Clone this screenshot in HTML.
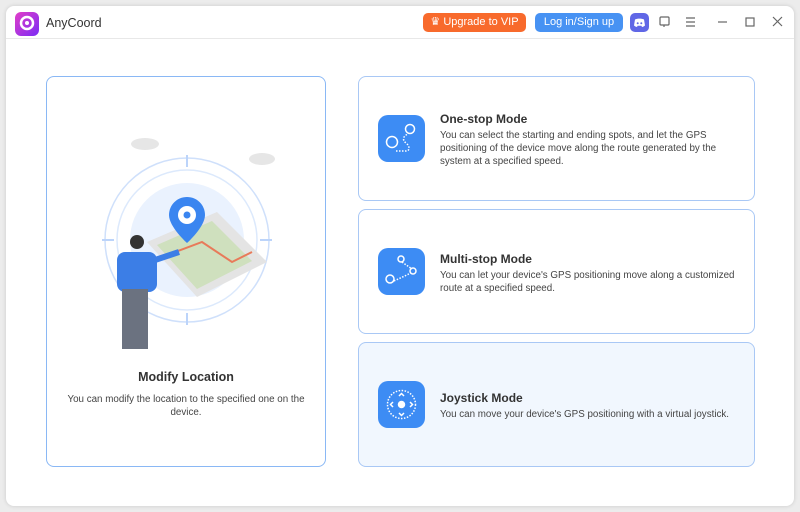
<!DOCTYPE html>
<html><head><meta charset="utf-8"><style>
*{box-sizing:border-box;margin:0;padding:0}
body{width:800px;height:512px;background:#ececec;font-family:"Liberation Sans",sans-serif;position:relative;overflow:hidden;color:#333}
.win{position:absolute;left:6px;top:6px;width:788px;height:500px;background:#fff;border-radius:8px;box-shadow:0 0 4px rgba(0,0,0,.15)}
.tb{position:absolute;left:0;top:0;width:788px;height:33px;border-bottom:1px solid #e8e8e8}
.logo{position:absolute;left:9px;top:6px;width:24px;height:24px;border-radius:6px;background:linear-gradient(135deg,#e23ec8,#7b2cf5)}
.title{position:absolute;left:40px;top:10px;font-size:12.5px;color:#333}
.btn{position:absolute;top:7px;height:19px;border-radius:5px;color:#fff;font-size:11px;line-height:19px;text-align:center}
.card{position:absolute;border:1px solid #a9c8f5;border-radius:8px;background:#fff}
.card.sel{background:#f1f7fe}
.icon{position:absolute;left:19px;width:47px;height:47px;border-radius:10px;background:#3d8cf4}
.h{position:absolute;left:81px;font-size:12px;font-weight:bold;color:#333}
.p{position:absolute;left:81px;font-size:9.8px;line-height:13px;color:#444;width:290px}
</style></head><body>
<div class="win">
<div class="tb">
<div class="logo"><svg width="24" height="24"><circle cx="12" cy="11" r="6" fill="none" stroke="#fff" stroke-width="2.5"/><circle cx="12" cy="11" r="2" fill="#fff"/></svg></div>
<div class="title">AnyCoord</div>
<div class="btn" style="left:417px;width:103px;background:#f86a2c">&#9819; Upgrade to VIP</div>
<div class="btn" style="left:529px;width:88px;background:#4792f3">Log in/Sign up</div>
<div style="position:absolute;left:624px;top:7px;width:19px;height:19px;border-radius:5px;background:#6067e6"><svg width="19" height="19"><path d="M5 6.5c2-1.2 7-1.2 9 0l1 6c-1 1-2.5 1.5-3 1.5l-.6-1.2h-3.8L7 14c-.5 0-2-.5-3-1.5z" fill="#fff"/><circle cx="7.7" cy="10.3" r="1" fill="#6067e6"/><circle cx="11.3" cy="10.3" r="1" fill="#6067e6"/></svg></div>
<svg style="position:absolute;left:650px;top:9px" width="130" height="16" stroke="#666" fill="none" stroke-width="1.2">
<rect x="4" y="2" width="9" height="8" rx="1"/><path d="M8 10v2"/>
<path d="M30 3h9M30 7h9M30 11h9"/>
<path d="M62 7h9"/><rect x="90" y="3" width="8" height="8"/><path d="M117 2l9 9M126 2l-9 9"/></svg>
</div>

<div class="card" style="left:40px;top:70px;width:280px;height:391px;border-color:#8ab8f5">
<svg style="position:absolute;left:40px;top:50px" width="210" height="230">
<ellipse cx="58" cy="17" rx="14" ry="6" fill="#e6e6e6"/><ellipse cx="175" cy="32" rx="13" ry="6" fill="#e6e6e6"/>
<circle cx="100" cy="113" r="82" fill="none" stroke="#cfe0fb" stroke-width="1.5"/>
<circle cx="100" cy="113" r="70" fill="none" stroke="#dce9fc" stroke-width="1.5"/>
<circle cx="100" cy="113" r="57" fill="#eaf2fe"/>
<path d="M100 28v12M100 186v12M15 113h12M173 113h12" stroke="#bcd4fa" stroke-width="2"/>
<path d="M60 115l70-30 50 50-70 35z" fill="#e4e4e4"/><path d="M70 118l55-24 40 40-55 28z" fill="#c9dfb4" opacity=".8"/>
<path d="M75 130l40-15 30 20 20-10" stroke="#e87a5a" stroke-width="2" fill="none"/>
<path d="M100 70c-10 0-18 8-18 18 0 12 18 28 18 28s18-16 18-28c0-10-8-18-18-18z" fill="#3a85f0"/>
<circle cx="100" cy="88" r="9" fill="#fff"/><circle cx="100" cy="88" r="3.5" fill="#3a85f0"/>
<rect x="30" y="125" width="40" height="40" rx="8" fill="#3c7ee6"/><circle cx="50" cy="115" r="7" fill="#333"/>
<path d="M62 135l30-10" stroke="#3c7ee6" stroke-width="6"/>
<rect x="35" y="162" width="26" height="60" fill="#6b7280"/>
</svg>
<div style="position:absolute;left:0;top:293px;width:278px;text-align:center;font-size:12.5px;font-weight:bold">Modify Location</div>
<div style="position:absolute;left:14px;top:316px;width:250px;text-align:center;font-size:9.8px;line-height:13px;color:#444">You can modify the location to the specified one on the device.</div>
</div>

<div class="card" style="left:352px;top:70px;width:397px;height:125px">
<div class="icon" style="top:38px"><svg width="47" height="47" fill="none" stroke="#fff" stroke-width="1.5"><circle cx="14" cy="27" r="5.5"/><circle cx="32" cy="14" r="4.5"/><path d="M18 36h10c4 0 4-5 0-8s-3-7 2-9" stroke-dasharray="1.5 1.5"/></svg></div>
<div class="h" style="top:35px">One-stop Mode</div>
<div class="p" style="top:52px">You can select the starting and ending spots, and let the GPS positioning of the device move along the route generated by the system at a specified speed.</div>
</div>
<div class="card" style="left:352px;top:203px;width:397px;height:125px">
<div class="icon" style="top:38px"><svg width="47" height="47" fill="none" stroke="#fff" stroke-width="1.5"><circle cx="12" cy="31" r="4"/><circle cx="23" cy="11" r="3"/><circle cx="35" cy="23" r="3"/><path d="M16 33l17-8M24 14l10 7" stroke-dasharray="1.5 1.5"/></svg></div>
<div class="h" style="top:42px">Multi-stop Mode</div>
<div class="p" style="top:59px;width:305px">You can let your device's GPS positioning move along a customized route at a specified speed.</div>
</div>
<div class="card sel" style="left:352px;top:336px;width:397px;height:125px">
<div class="icon" style="top:38px"><svg width="47" height="47" fill="none" stroke="#fff" stroke-width="1.5"><circle cx="23.5" cy="23.5" r="14" stroke-dasharray="1.5 1.5"/><circle cx="23.5" cy="23.5" r="3" fill="#fff"/><path d="M21 15l2.5-2.5 2.5 2.5M21 32l2.5 2.5 2.5-2.5M15 21l-2.5 2.5 2.5 2.5M32 21l2.5 2.5-2.5 2.5"/></svg></div>
<div class="h" style="top:48px">Joystick Mode</div>
<div class="p" style="top:65px;width:320px">You can move your device's GPS positioning with a virtual joystick.</div>
</div>
</div>
</body></html>
